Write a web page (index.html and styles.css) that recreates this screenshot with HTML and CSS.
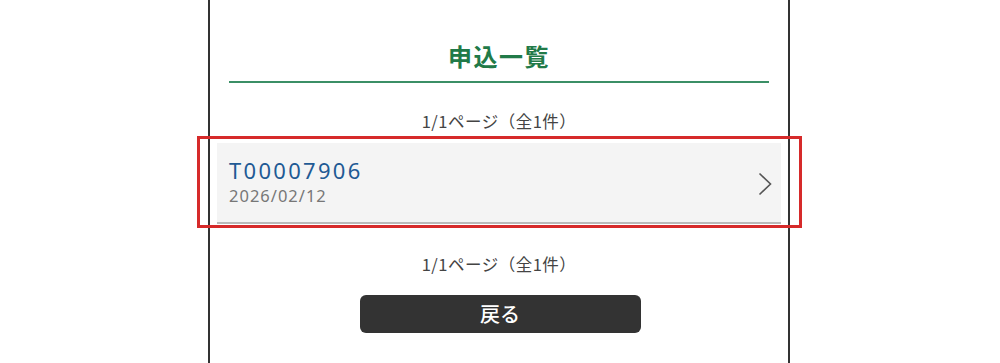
FILE: index.html
```html
<!DOCTYPE html>
<html lang="ja">
<head>
<meta charset="utf-8">
<title>申込一覧</title>
<link rel="stylesheet" href="styles.css">
</head>
<body>
<div class="frame">
  <div class="title-wrap">
    <h1 class="title">申込一覧</h1>
  </div>
  <p class="pager">1/1ページ（全1件）</p>
  <div class="list">
    <a class="card" href="#">
      <div class="card-body">
        <div class="card-id">T00007906</div>
        <div class="card-date">2026/02/12</div>
      </div>
      <svg class="chev" width="14" height="24" viewBox="0 0 14 24" aria-hidden="true"><path d="M1.5 1.5 L12.5 12 L1.5 22.5" fill="none" stroke="#555" stroke-width="1.6"/></svg>
      <span class="highlight"></span>
    </a>
  </div>
  <p class="pager pager-bottom">1/1ページ（全1件）</p>
  <div class="actions">
    <button class="back" type="button">戻る</button>
  </div>
</div>
</body>
</html>
```
FILE: styles.css
```css
html, body {
  margin: 0;
  padding: 0;
  background: #fff;
}
body {
  font-family: "Noto Sans", "Noto Sans CJK JP", sans-serif;
  color: #333;
  height: 363px;
  overflow: hidden;
}
.frame {
  width: 578px;
  height: 323px;
  margin: 0 auto;
  padding-top: 40px;
  border-left: 2px solid #333;
  border-right: 2px solid #333;
  box-sizing: content-box;
  transform: translateX(-1px);
}
.title-wrap {
  padding: 0 19px;
}
.title {
  margin: 0;
  padding-bottom: 9px;
  font-family: "Noto Sans CJK JP", sans-serif;
  font-size: 24px;
  line-height: 32px;
  font-weight: 700;
  color: #217a48;
  text-align: center;
  letter-spacing: 1.5px;
  border-bottom: 2px solid #3b8f66;
}
.pager {
  margin: 26px 0 0;
  font-family: "Noto Sans CJK JP", sans-serif;
  font-size: 16.5px;
  line-height: 24px;
  color: #444;
  text-align: center;
  letter-spacing: 0.5px;
}
.pager-bottom {
  margin-top: 28px;
}
.list {
  padding: 0 7px;
  margin-top: 10px;
}
.card {
  position: relative;
  display: flex;
  align-items: center;
  justify-content: space-between;
  height: 79px;
  padding: 0 9px 0 12px;
  background: #f4f4f4;
  border-bottom: 2px solid #b9b9b9;
  text-decoration: none;
}
.card-body {
  display: flex;
  flex-direction: column;
  margin-bottom: 3px;
}
.card-id {
  font-size: 22px;
  line-height: 28px;
  color: #1f5a94;
  letter-spacing: 2.3px;
}
.card-date {
  margin-top: 1px;
  font-size: 16.5px;
  line-height: 22px;
  color: #777;
  letter-spacing: 1px;
}
.chev {
  display: block;
  margin-top: 3px;
}
.highlight {
  position: absolute;
  left: -20px;
  right: -21px;
  top: -7px;
  bottom: -6px;
  border: 3px solid #d62a2a;
  pointer-events: none;
}
.actions {
  display: flex;
  justify-content: center;
  margin-top: 19px;
}
.back {
  width: 281px;
  height: 38px;
  border: none;
  border-radius: 6px;
  background: #333;
  color: #fff;
  font-family: "Noto Sans CJK JP", sans-serif;
  font-size: 20px;
  font-weight: 500;
  line-height: 38px;
  padding: 0;
  transform: translateX(1px);
}
```
